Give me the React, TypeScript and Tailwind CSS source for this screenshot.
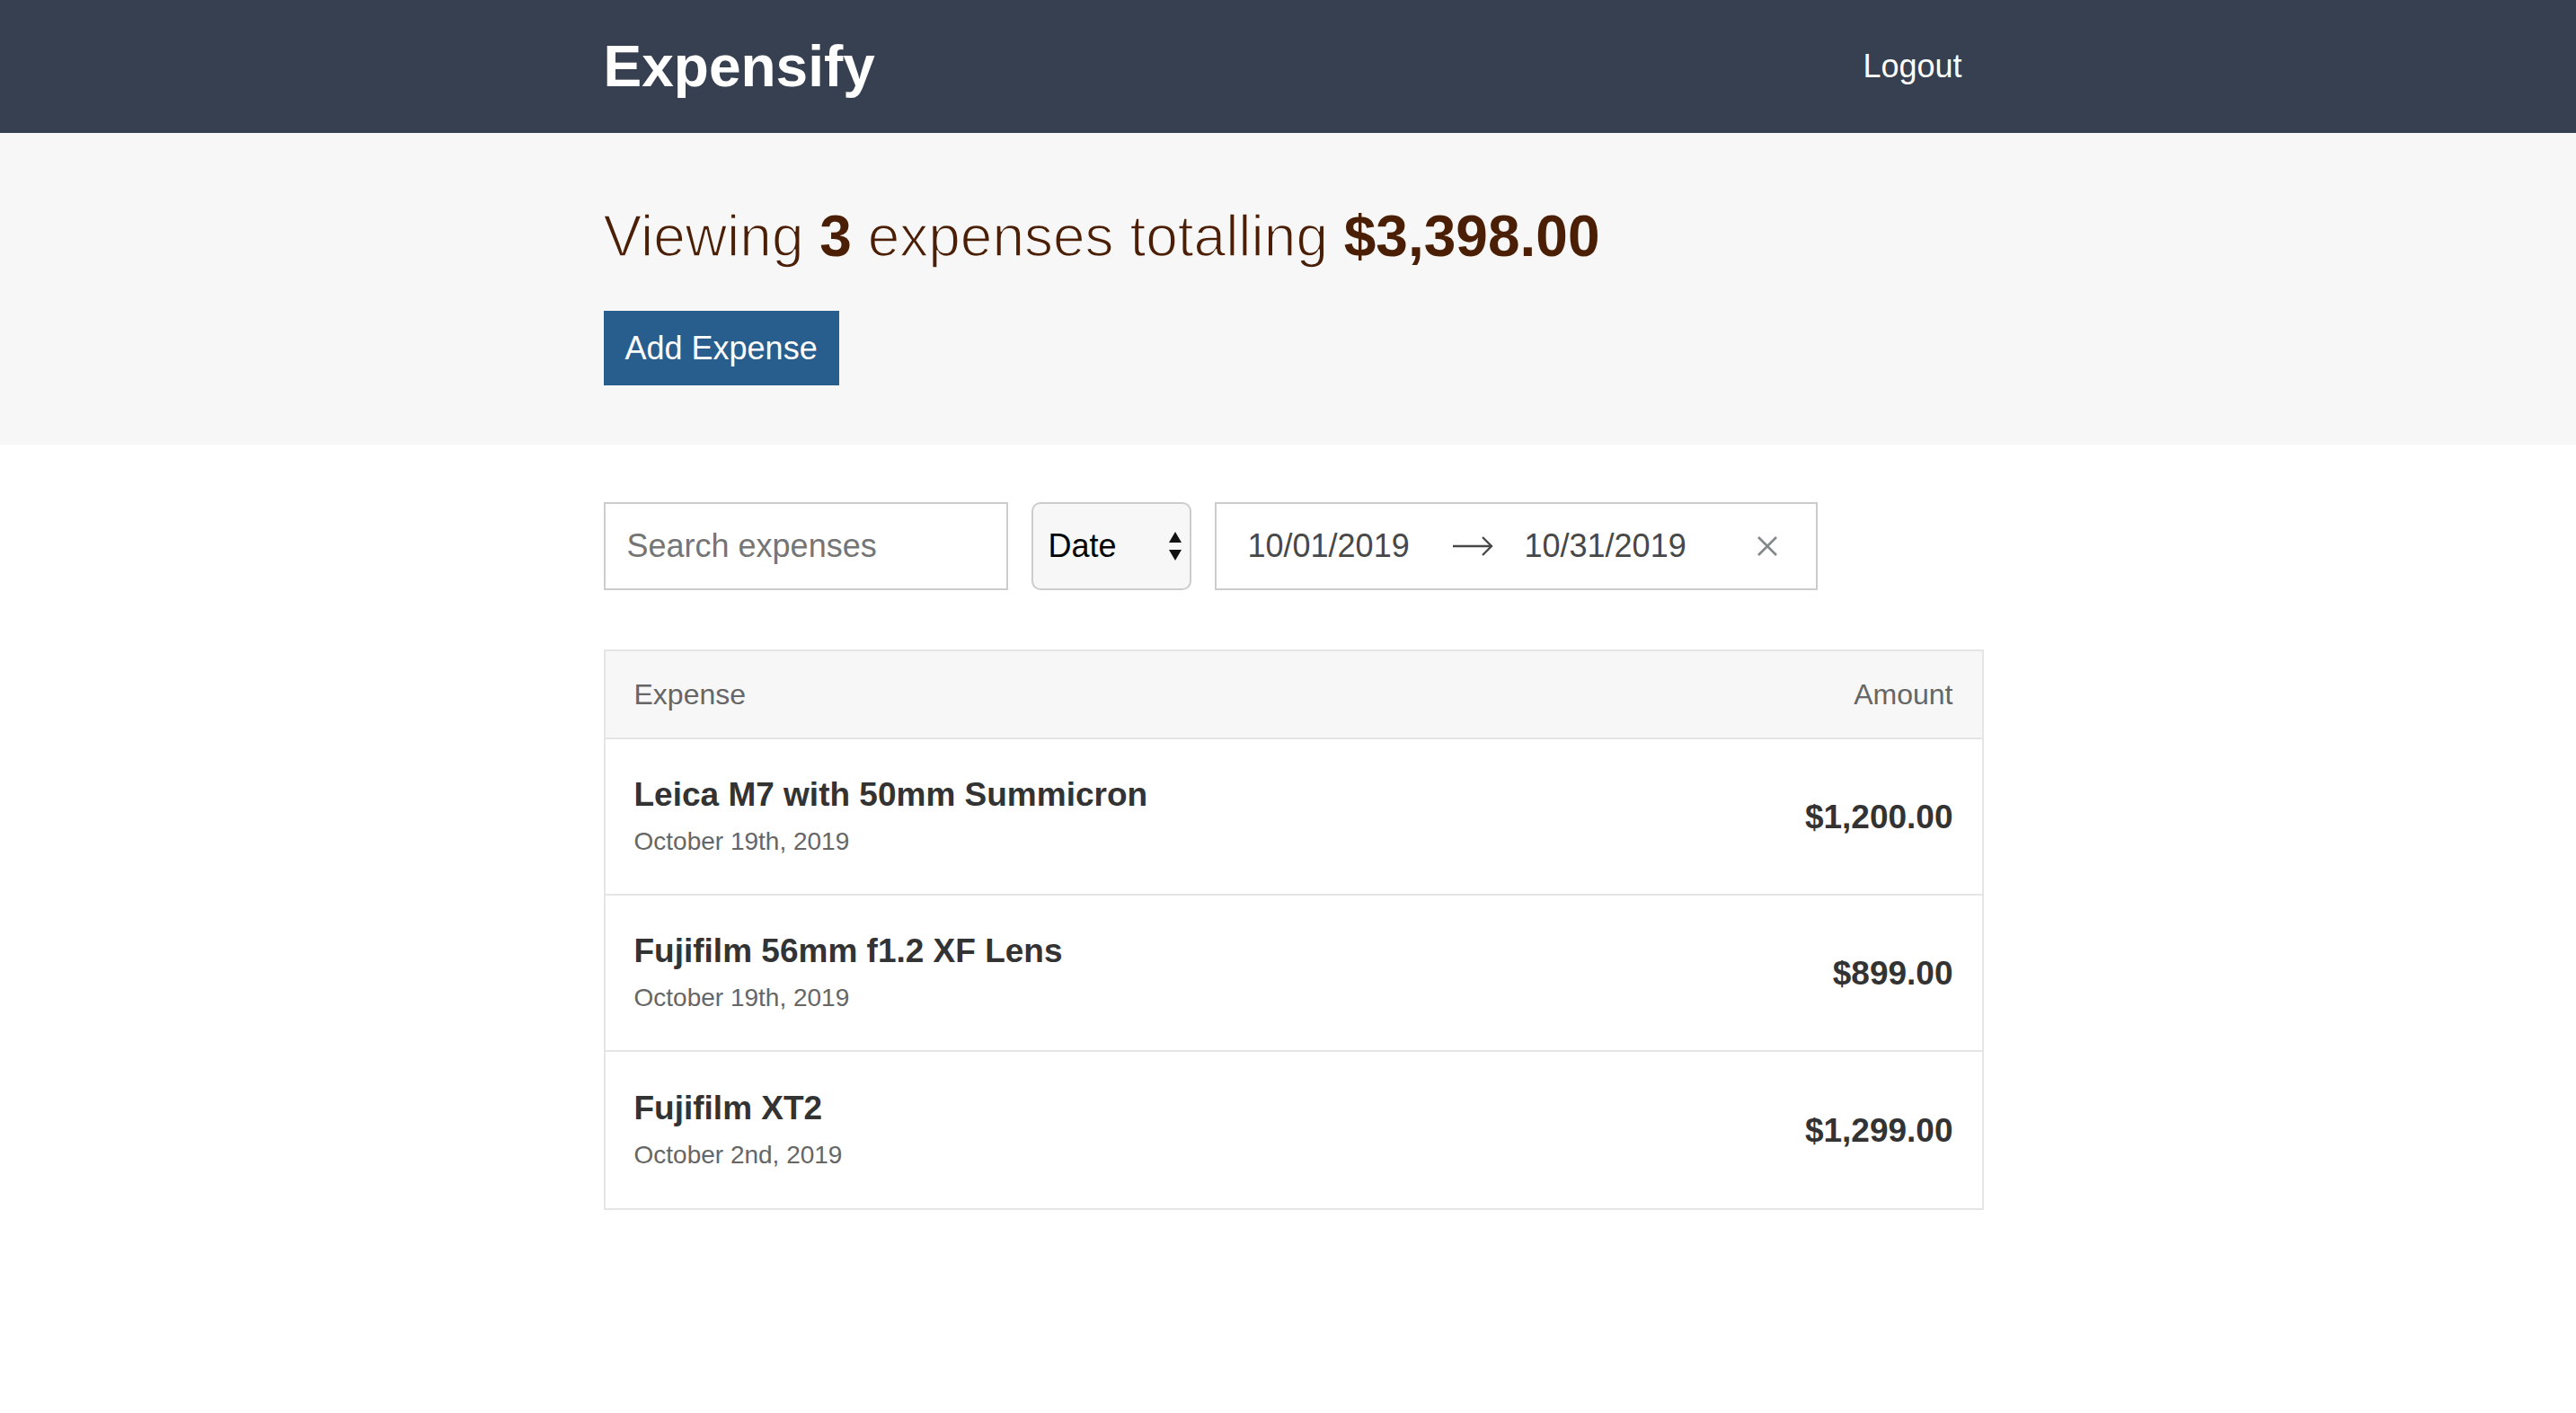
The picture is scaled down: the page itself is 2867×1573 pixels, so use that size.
import React from "react";

interface Expense {
  id: string;
  description: string;
  createdAt: string;
  amount: string;
}

const expenses: Expense[] = [
  { id: "1", description: "Leica M7 with 50mm Summicron", createdAt: "October 19th, 2019", amount: "$1,200.00" },
  { id: "2", description: "Fujifilm 56mm f1.2 XF Lens", createdAt: "October 19th, 2019", amount: "$899.00" },
  { id: "3", description: "Fujifilm XT2", createdAt: "October 2nd, 2019", amount: "$1,299.00" },
];

const Header = () => (
  <header className="bg-[#364051] pl-[12px]">
    <div className="mx-auto w-[1536px] h-[148px] flex items-center justify-between">
      <h1 className="text-[64px] font-bold text-white leading-none">Expensify</h1>
      <button className="text-[36px] text-white px-[24px] leading-none">Logout</button>
    </div>
  </header>
);

// light weight isn't installed, so thin the regular glyphs with a background-coloured stroke
const light = "[-webkit-text-stroke:1.6px_#f7f7f7]";

const Summary = () => (
  <div className="bg-[#f7f7f7] pl-[12px] pt-[64px] pb-[66px]">
    <div className="mx-auto w-[1536px]">
      <h2 className="text-[64px] leading-[1.6] text-[#4a1f05] font-normal mb-[32px]">
        <span className={light}>Viewing </span>
        <span className="font-bold">3</span>
        <span className={light}> expenses totalling </span>
        <span className="font-bold">$3,398.00</span>
      </h2>
      <button className="h-[83px] px-[24px] bg-[#285e8e] text-white text-[36px] leading-none">
        Add Expense
      </button>
    </div>
  </div>
);

const Filters = () => (
  <div className="flex items-center gap-[26px] h-[98px]">
    <input
      className="w-[450px] h-full border-2 border-[#cacccd] px-[24px] text-[36px] text-[#333] placeholder:text-[#757575] outline-none"
      placeholder="Search expenses"
    />
    <div className="w-[178px] h-full border-2 border-[#cacccd] rounded-[10px] bg-[#f7f7f7] flex items-center justify-between pl-[17px] pr-[8px]">
      <span className="text-[36px] text-black">Date</span>
      <svg width="16" height="34" viewBox="0 0 16 34" className="mt-[1px]">
        <path d="M8 0 L15 12 L1 12 Z" fill="#111" />
        <path d="M1 20 L15 20 L8 32 Z" fill="#111" />
      </svg>
    </div>
    <div className="w-[671px] h-full border-2 border-[#cacccd] flex items-center pl-[35px] text-[36px] text-[#484848]">
      <span className="w-[227px]">10/01/2019</span>
      <span className="w-[81px] flex items-center">
        <svg width="46" height="24" viewBox="0 0 46 24" fill="none" stroke="#484848" strokeWidth="2.4">
          <path d="M1 12 H44" />
          <path d="M34 2 L44 12 L34 22" />
        </svg>
      </span>
      <span className="w-[258px]">10/31/2019</span>
      <svg width="24" height="24" viewBox="0 0 24 24" fill="none" stroke="#82888a" strokeWidth="2.6">
        <path d="M2 2 L22 22 M22 2 L2 22" />
      </svg>
    </div>
  </div>
);

const ExpenseList = () => (
  <div className="mt-[66px] border-2 border-[#e5e5e5]">
    <div className="h-[98px] bg-[#f7f7f7] border-b-2 border-[#e5e5e5] flex items-center justify-between px-[32px] text-[32px] text-[#666]">
      <span>Expense</span>
      <span>Amount</span>
    </div>
    {expenses.map((expense, i) => (
      <div
        key={expense.id}
        className={`h-[174px] flex items-center justify-between px-[32px] ${
          i < expenses.length - 1 ? "border-b-2 border-[#e5e5e5]" : ""
        }`}
      >
        <div className="flex flex-col">
          <h3 className="text-[37px] leading-[40px] font-bold text-[#333]">{expense.description}</h3>
          <span className="text-[28px] leading-[34px] text-[#666] mt-[15px]">{expense.createdAt}</span>
        </div>
        <h3 className="text-[37px] font-bold text-[#333]">{expense.amount}</h3>
      </div>
    ))}
  </div>
);

export default function App() {
  return (
    <div className="min-h-screen bg-white font-['Liberation_Sans',Arial,sans-serif]">
      <Header />
      <Summary />
      <div className="pl-[12px] pt-[64px]">
        <div className="mx-auto w-[1536px]">
          <Filters />
          <ExpenseList />
        </div>
      </div>
    </div>
  );
}
